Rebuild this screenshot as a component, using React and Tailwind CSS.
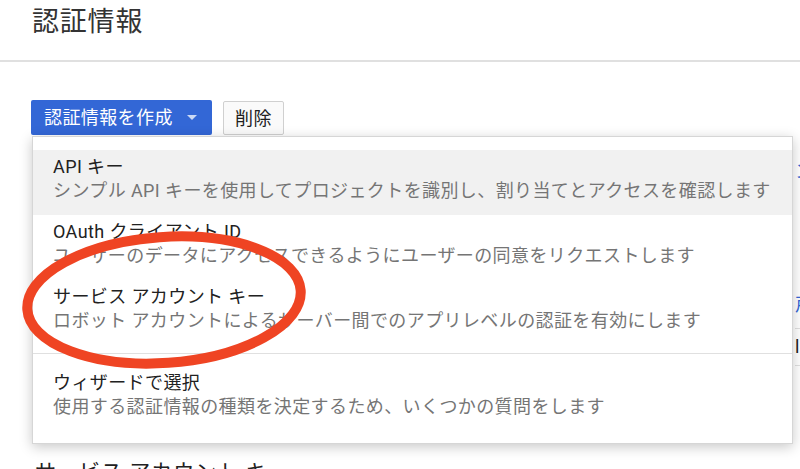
import React from 'react';

const font = { fontFamily: 'Roboto, "Noto Sans CJK JP", sans-serif' };

const items = [
  { title: 'API キー', desc: 'シンプル API キーを使用してプロジェクトを識別し、割り当てとアクセスを確認します', active: true },
  { title: 'OAuth クライアント ID', desc: 'ユーザーのデータにアクセスできるようにユーザーの同意をリクエストします' },
  { title: 'サービス アカウント キー', desc: 'ロボット アカウントによるサーバー間でのアプリレベルの認証を有効にします' },
];

const MenuItem = ({ item }) => (
  <div className={`pl-[20px] pt-[5px] pb-[12px] ${item.active ? 'bg-[#f1f1f1]' : ''}`}>
    <div className="text-[18px] leading-[24px] tracking-[0.4px] text-[#212121]">{item.title}</div>
    <div className="text-[18px] leading-[24px] tracking-[0.4px] text-[#757575]">{item.desc}</div>
  </div>
);

export default function App() {
  return (
    <div className="relative w-[800px] h-[469px] overflow-hidden bg-white" style={font}>
      {/* Header */}
      <div className="h-[62px] border-b-2 border-[#e0e0e0] pl-[32px]">
        <h1 className="text-[27px] leading-[44px] tracking-[0.8px] text-[#333333]">認証情報</h1>
      </div>

      {/* Toolbar */}
      <div className="flex items-start gap-[11px] pl-[31px] pt-[38px]">
        <button className="flex items-center h-[35px] w-[181px] pl-[13px] rounded-[2px] bg-[#3367d6] text-white text-[18px] tracking-[0.4px]">
          <span>認証情報を作成</span>
          <svg width="10" height="5" viewBox="0 0 10 5" className="ml-[14px]">
            <path d="M0 0 L10 0 L5 5 Z" fill="rgba(255,255,255,0.75)" />
          </svg>
        </button>
        <button className="mt-[1px] h-[34px] w-[61px] rounded-[2px] border border-[#d0d0d0] bg-[#fafafa] text-[18px] tracking-[0.4px] text-[#212121]">
          削除
        </button>
      </div>

      {/* Page content behind the menu */}
      <div className="pl-[795px] whitespace-nowrap text-[18px] leading-[24px]">
        <div className="pt-[25px] h-[158px] text-[#3367d6]">ンソール</div>
        <div className="h-[24px] text-[#3367d6]">戸</div>
        <div className="h-[12px] border-b border-[#e0e0e0]"></div>
        <div className="h-[36px] pt-[6px] text-[#212121]">l</div>
        <div className="border-b border-[#e0e0e0]"></div>
      </div>
      <div className="pl-[35px] pt-[94px] text-[21px] leading-[24px] tracking-[1px] text-[#212121] whitespace-nowrap">
        サービス アカウント キー
      </div>

      {/* Dropdown menu */}
      <div className="absolute left-[32px] top-[136px] w-[761px] h-[308px] bg-white border border-[#d6d6d6] shadow-[0_3px_12px_rgba(0,0,0,0.22)] pt-[13px]">
        {items.map((item) => (
          <MenuItem key={item.title} item={item} />
        ))}
        <div className="mt-[8px] border-t border-[#e0e0e0]"></div>
        <div className="pl-[20px] pt-[17px]">
          <div className="text-[18px] leading-[24px] tracking-[0.4px] text-[#212121]">ウィザードで選択</div>
          <div className="text-[18px] leading-[24px] tracking-[0.4px] text-[#757575]">使用する認証情報の種類を決定するため、いくつかの質問をします</div>
        </div>
      </div>

      {/* Red annotation ellipse */}
      <svg className="absolute left-0 top-0 pointer-events-none" width="800" height="469">
        <ellipse cx="164" cy="300" rx="137" ry="63" transform="rotate(-4 164 300)" fill="none" stroke="#ef4423" strokeWidth="10" />
      </svg>
    </div>
  );
}
